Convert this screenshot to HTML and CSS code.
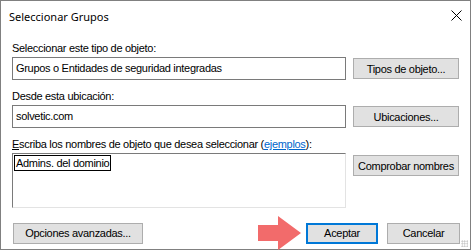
FILE: index.html
```html
<!DOCTYPE html>
<html lang="es">
<head>
  <meta charset="UTF-8">
  <title>Seleccionar Grupos</title>
  <link rel="stylesheet" href="styles.css">
</head>
<body>
<div class="ventana">
  <div class="titulo">
    <span>Seleccionar Grupos</span>
    <svg class="cerrar" width="11" height="11" viewBox="0 0 11 11">
      <path d="M0.5 0.5 L10.5 10.5 M10.5 0.5 L0.5 10.5" stroke="#000" stroke-width="1"/>
    </svg>
  </div>

  <div class="contenido">
    <div class="etiqueta">Seleccionar este tipo de objeto:</div>
    <div class="fila">
      <div class="caja">Grupos o Entidades de seguridad integradas</div>
      <button class="boton">Tipos de objeto...</button>
    </div>

    <div class="etiqueta">Desde esta ubicación:</div>
    <div class="fila">
      <div class="caja">solvetic.com</div>
      <button class="boton">Ubicaciones...</button>
    </div>

    <div class="etiqueta"><u>E</u>scriba los nombres de objeto que desea seleccionar (<a href="#">ejemplos</a>):</div>
    <div class="fila arriba">
      <div class="area"><span class="foco">Admins. del dominio</span></div>
      <button class="boton">Comprobar nombres</button>
    </div>

    <div class="pie">
      <button class="boton avanzadas">Opciones avanzadas...</button>
      <div class="derecha">
        <svg class="flecha" width="44" height="34" viewBox="0 0 44 34">
          <polygon points="0,9 20,9 20,0 43,17 20,34 20,25 0,25" fill="#f26b6b"/>
        </svg>
        <button class="boton aceptar">Aceptar</button>
        <button class="boton cancelar">Cancelar</button>
      </div>
    </div>
  </div>
  <div class="agarre"></div>
</div>
</body>
</html>
```

FILE: styles.css
```css
body {
    margin: 0;
    background-color: #ffffff;
    font-family: "Liberation Sans", Arial, sans-serif;
    font-size: 11px;
    letter-spacing: -0.3px;
    color: #000;
}
.ventana {
    position: relative;
    width: 471px;
    height: 250px;
    box-sizing: border-box;
    border: 1px solid #808080;
    background-color: #ffffff;
}
.titulo {
    display: flex;
    justify-content: space-between;
    align-items: center;
    height: 30px;
    padding: 0 8px 0 8px;
    font-family: "Noto Sans", sans-serif;
    font-size: 11px;
    letter-spacing: 0;
}
.cerrar {
    margin-top: -1px;
}
.contenido {
    padding: 9px 0 0 11px;
}
.etiqueta {
    height: 17px;
    line-height: 17px;
}
.etiqueta a {
    color: #0066cc;
}
.fila {
    display: flex;
    align-items: center;
    gap: 7px;
    margin-bottom: 8px;
}
.fila.arriba {
    align-items: flex-start;
}
.caja {
    width: 334px;
    height: 23px;
    box-sizing: border-box;
    border: 1px solid #7a7a7a;
    padding: 0 3px;
    line-height: 21px;
}
.area {
    width: 334px;
    height: 55px;
    box-sizing: border-box;
    border: 1px solid;
    border-color: #7a7a7a #e3e3e3 #e3e3e3 #7a7a7a;
    padding: 1px 1px;
}
.foco {
    display: inline-block;
    border: 1px solid #000;
    padding: 0 1px;
    line-height: 14px;
}
.boton {
    width: 106px;
    height: 21px;
    box-sizing: border-box;
    border: 1px solid #adadad;
    background-color: #e1e1e1;
    font-family: "Liberation Sans", Arial, sans-serif;
    font-size: 11px;
    letter-spacing: -0.3px;
    color: #000;
    padding: 0;
}
.arriba .boton {
    margin-top: 2px;
}
.pie {
    display: flex;
    justify-content: space-between;
    align-items: center;
    width: 448px;
    margin-top: 3px;
}
.avanzadas {
    width: 130px;
    margin-left: 1px;
}
.derecha {
    display: flex;
    align-items: center;
}
.flecha {
    margin-right: 4px;
}
.aceptar {
    width: 72px;
    border: 2px solid #0078d7;
    margin-right: 9px;
}
.cancelar {
    width: 73px;
}
.agarre {
    position: absolute;
    right: 2px;
    bottom: 2px;
    width: 7px;
    height: 7px;
    background-image: radial-gradient(#bcbcbc 0.8px, transparent 0.9px);
    background-size: 2.5px 2.5px;
}
```
